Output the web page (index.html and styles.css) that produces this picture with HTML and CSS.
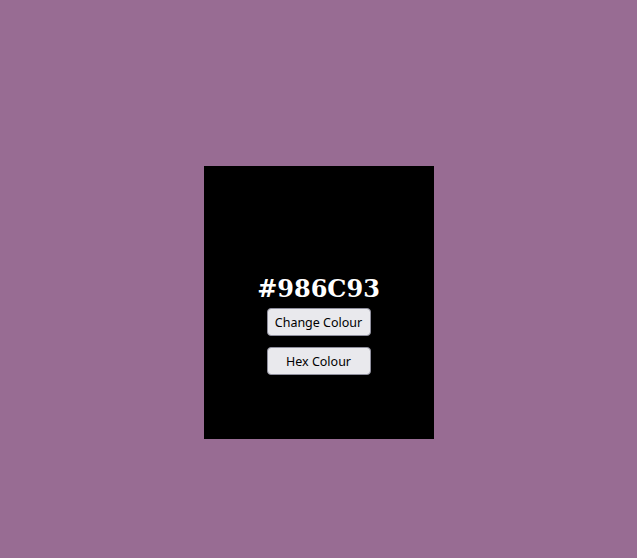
FILE: index.html
```html
<!DOCTYPE html>
<html>
<head>
<meta charset="utf-8">
<link rel="stylesheet" href="styles.css">
</head>
<body>
<div class="page">
  <div class="card">
    <h2 class="hex">#986C93</h2>
    <button class="btn btn-first">Change Colour</button>
    <button class="btn">Hex Colour</button>
  </div>
</div>
</body>
</html>
```
FILE: styles.css
```css
html, body {
  margin: 0;
  padding: 0;
}
body {
  background: #986c93;
  height: 558px;
}
.page {
  display: flex;
  justify-content: center;
  padding-top: 166px;
}
.card {
  width: 230px;
  height: 273px;
  box-sizing: border-box;
  background: #000;
  display: flex;
  flex-direction: column;
  align-items: center;
  padding-top: 109px;
}
.hex {
  margin: 0;
  height: 27px;
  line-height: 28px;
  font-family: "DejaVu Serif", serif;
  font-size: 24px;
  font-weight: bold;
  color: #fff;
}
.btn {
  width: 104px;
  height: 28px;
  box-sizing: border-box;
  margin-top: 6px;
  background: #e9e9ed;
  border: 1px solid #8f8f9d;
  border-radius: 4px;
  color: #000;
  font-family: "Noto Sans", sans-serif;
  font-size: 12.5px;
  padding: 0;
}
.btn + .btn {
  margin-top: 11px;
}
```
